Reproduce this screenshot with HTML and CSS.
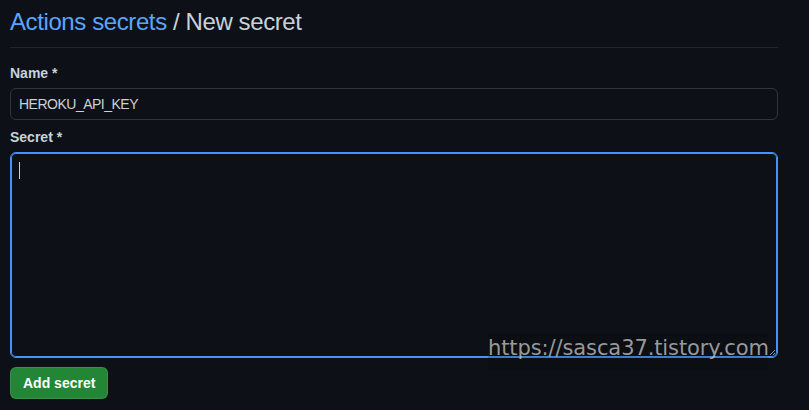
FILE: index.html
```html
<!DOCTYPE html>
<html lang="en">
<head>
  <meta charset="UTF-8">
  <meta name="viewport" content="width=device-width, initial-scale=1.0">
  <title>New secret</title>
  <link rel="stylesheet" href="styles.css">
</head>
<body>
  <div class="page">
    <div class="subhead">
      <h1><a href="#">Actions secrets</a> / New secret</h1>
    </div>

    <form class="secret-form">
      <div class="form-group">
        <label for="secret-name">Name *</label>
        <input id="secret-name" class="form-control" type="text" value="HEROKU_API_KEY">
      </div>

      <div class="form-group">
        <label>Secret *</label>
        <div class="form-control textarea focused">
          <span class="caret"></span>
          <svg class="resize" width="8" height="8" viewBox="0 0 8 8">
            <path d="M7 2 L2 7 M7 5 L5 7" stroke="#8b949e" stroke-width="1"/>
          </svg>
        </div>
      </div>

      <button type="button" class="btn-primary">Add secret</button>
    </form>
  </div>

  <div class="watermark">https://sasca37.tistory.com</div>
</body>
</html>
```

FILE: styles.css
```css
body {
  margin: 0;
  background-color: #0d1117;
  color: #c9d1d9;
  font-family: "Liberation Sans", Arial, sans-serif;
  font-size: 14px;
}
.page {
  width: 768px;
  padding: 7px 10px 0;
}
.subhead {
  padding-bottom: 10px;
  border-bottom: 1px solid #21262d;
}
h1 {
  margin: 0;
  font-size: 24px;
  line-height: 30px;
  font-weight: 400;
  letter-spacing: -0.4px;
  color: #c9d1d9;
}
h1 a {
  color: #58a6ff;
  text-decoration: none;
}
.secret-form {
  margin-top: 15px;
}
.form-group {
  margin-bottom: 7px;
}
.form-group label {
  display: block;
  margin-bottom: 4px;
  font-weight: bold;
  line-height: 21px;
  color: #c9d1d9;
}
.form-control {
  box-sizing: border-box;
  width: 100%;
  height: 32px;
  padding: 0 8px;
  background-color: #0d1117;
  border: 1px solid #30363d;
  border-radius: 6px;
  color: #c9d1d9;
  font-family: inherit;
  font-size: 14px;
  letter-spacing: -0.5px;
  outline: none;
}
.textarea {
  position: relative;
  height: 206px;
  padding: 9px 8px;
}
.textarea.focused {
  border-color: #4493f8;
  box-shadow: inset 0 0 0 1px #4493f8;
}
.caret {
  display: block;
  width: 1px;
  height: 17px;
  background-color: #c9d1d9;
}
.resize {
  position: absolute;
  right: 1px;
  bottom: 1px;
}
.btn-primary {
  margin-top: 2px;
  height: 32px;
  padding: 0 12px;
  background-color: #238636;
  border: 1px solid rgba(240, 246, 252, 0.1);
  border-radius: 6px;
  color: #ffffff;
  font-family: inherit;
  font-size: 14px;
  font-weight: bold;
}
.watermark {
  position: absolute;
  left: 488px;
  top: 333px;
  width: 280px;
  height: 37px;
  background-color: rgba(0, 0, 0, 0.15);
  color: rgba(200, 200, 200, 0.75);
  font-family: "DejaVu Sans", sans-serif;
  font-size: 21px;
  line-height: 31px;
  letter-spacing: -0.1px;
}
```
